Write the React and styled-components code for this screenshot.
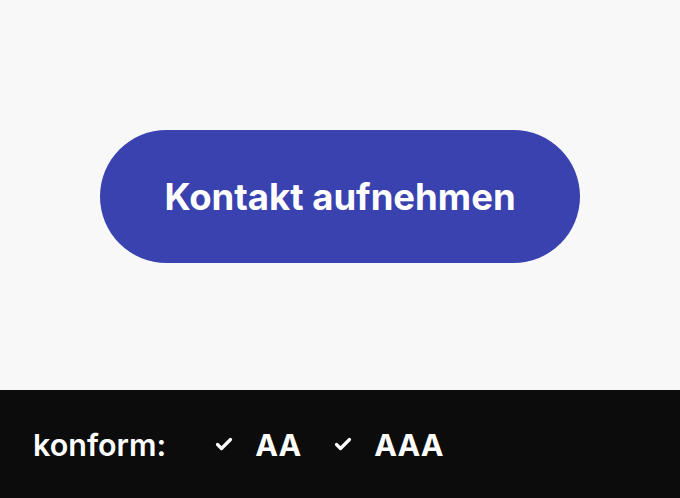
import React from "react";
import styled, { createGlobalStyle } from "styled-components";

const Global = createGlobalStyle`
  html, body {
    margin: 0;
    padding: 0;
    background: #f8f8f8;
    font-family: Inter, "Noto Sans", sans-serif;
  }
`;

const Page = styled.div`
  width: 680px;
  height: 498px;
  display: flex;
  flex-direction: column;
`;

const Stage = styled.div`
  flex: 1;
  display: flex;
  align-items: center;
  justify-content: center;
  background: #f8f8f8;
`;

const Button = styled.button`
  width: 480px;
  height: 133px;
  margin-top: 3px;
  border: none;
  border-radius: 67px;
  background: #3a42b0;
  color: #fff;
  font-family: Inter, sans-serif;
  font-size: 36.5px;
  font-weight: 700;
  cursor: pointer;
`;

const Bar = styled.div`
  height: 108px;
  background: #0c0c0c;
  color: #fff;
  display: flex;
  align-items: center;
  padding: 0 33px;
  font-size: 30.5px;
  font-weight: 600;
`;

const Label = styled.span`
  margin-right: 49px;
`;

const Level = styled.span`
  display: flex;
  align-items: center;
  gap: 22px;
  margin-right: 33px;
  font-weight: 700;
`;

const Tick = () => (
  <svg width="18" height="14" viewBox="0 0 18 14">
    <path d="M2.5 7.5 L6.5 11.5 L15.5 2.5" fill="none" stroke="#fff" strokeWidth="3.2" strokeLinecap="round" strokeLinejoin="round" />
  </svg>
);

export default function App() {
  return (
    <Page>
      <Global />
      <Stage>
        <Button>Kontakt aufnehmen</Button>
      </Stage>
      <Bar>
        <Label>konform:</Label>
        <Level><Tick />AA</Level>
        <Level><Tick />AAA</Level>
      </Bar>
    </Page>
  );
}
